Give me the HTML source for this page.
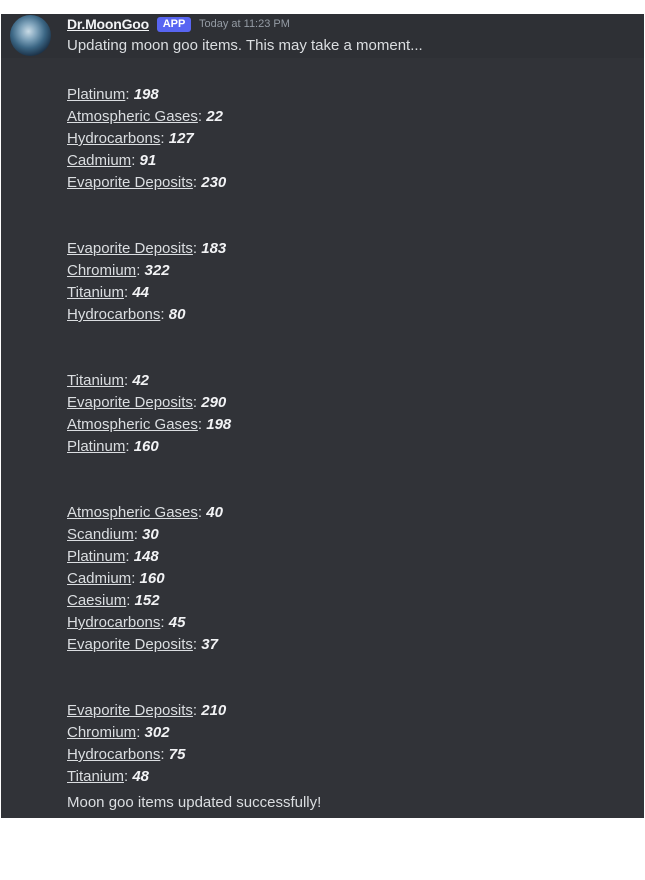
<!DOCTYPE html>
<html><head><meta charset="utf-8"><style>
body{margin:0;background:#fff;width:645px;height:880px;position:relative;font-family:"Liberation Sans",sans-serif;overflow:hidden}
.panel{position:absolute;left:1px;top:14px;width:643px;height:804px;background:#313338}
.top{position:absolute;left:1px;top:14px;width:643px;height:44px;background:#2e3035}
.av{position:absolute;left:10px;top:15px;width:41px;height:41px;border-radius:50%;background:radial-gradient(circle at 45% 40%,#c9dbe6 0,#7fa3bb 25%,#3b6684 50%,#1b3147 75%,#0e1a27 100%)}
.name{position:absolute;left:67px;top:16px;color:#f2f3f5;font-size:14px;font-weight:bold;text-decoration:underline;letter-spacing:-0.2px}
.badge{position:absolute;left:157px;top:17px;width:34px;height:15px;background:#5865f2;color:#fff;font-size:11px;font-weight:bold;line-height:15px;text-align:center;border-radius:3px}
.time{position:absolute;left:199px;top:18px;color:#949ba4;font-size:11px}
.t{position:absolute;left:67px;color:#dbdee1;font-size:15px;line-height:22px;white-space:nowrap}
.t u{text-decoration:underline}
.t b{font-style:italic;color:#f2f3f5}
</style></head><body>
<div class="panel"></div><div class="top"></div>
<div class="av"></div>
<div class="name">Dr.MoonGoo</div><div class="badge">APP</div><div class="time">Today at 11:23 PM</div>
<div class="t" style="top:35px">Updating moon goo items. This may take a moment...</div>
<div class="t" style="top:84px"><u>Platinum</u>: <b>198</b><br><u>Atmospheric Gases</u>: <b>22</b><br><u>Hydrocarbons</u>: <b>127</b><br><u>Cadmium</u>: <b>91</b><br><u>Evaporite Deposits</u>: <b>230</b></div>
<div class="t" style="top:238px"><u>Evaporite Deposits</u>: <b>183</b><br><u>Chromium</u>: <b>322</b><br><u>Titanium</u>: <b>44</b><br><u>Hydrocarbons</u>: <b>80</b></div>
<div class="t" style="top:370px"><u>Titanium</u>: <b>42</b><br><u>Evaporite Deposits</u>: <b>290</b><br><u>Atmospheric Gases</u>: <b>198</b><br><u>Platinum</u>: <b>160</b></div>
<div class="t" style="top:502px"><u>Atmospheric Gases</u>: <b>40</b><br><u>Scandium</u>: <b>30</b><br><u>Platinum</u>: <b>148</b><br><u>Cadmium</u>: <b>160</b><br><u>Caesium</u>: <b>152</b><br><u>Hydrocarbons</u>: <b>45</b><br><u>Evaporite Deposits</u>: <b>37</b></div>
<div class="t" style="top:700px"><u>Evaporite Deposits</u>: <b>210</b><br><u>Chromium</u>: <b>302</b><br><u>Hydrocarbons</u>: <b>75</b><br><u>Titanium</u>: <b>48</b></div>
<div class="t" style="top:792px">Moon goo items updated successfully!</div>
</body></html>
